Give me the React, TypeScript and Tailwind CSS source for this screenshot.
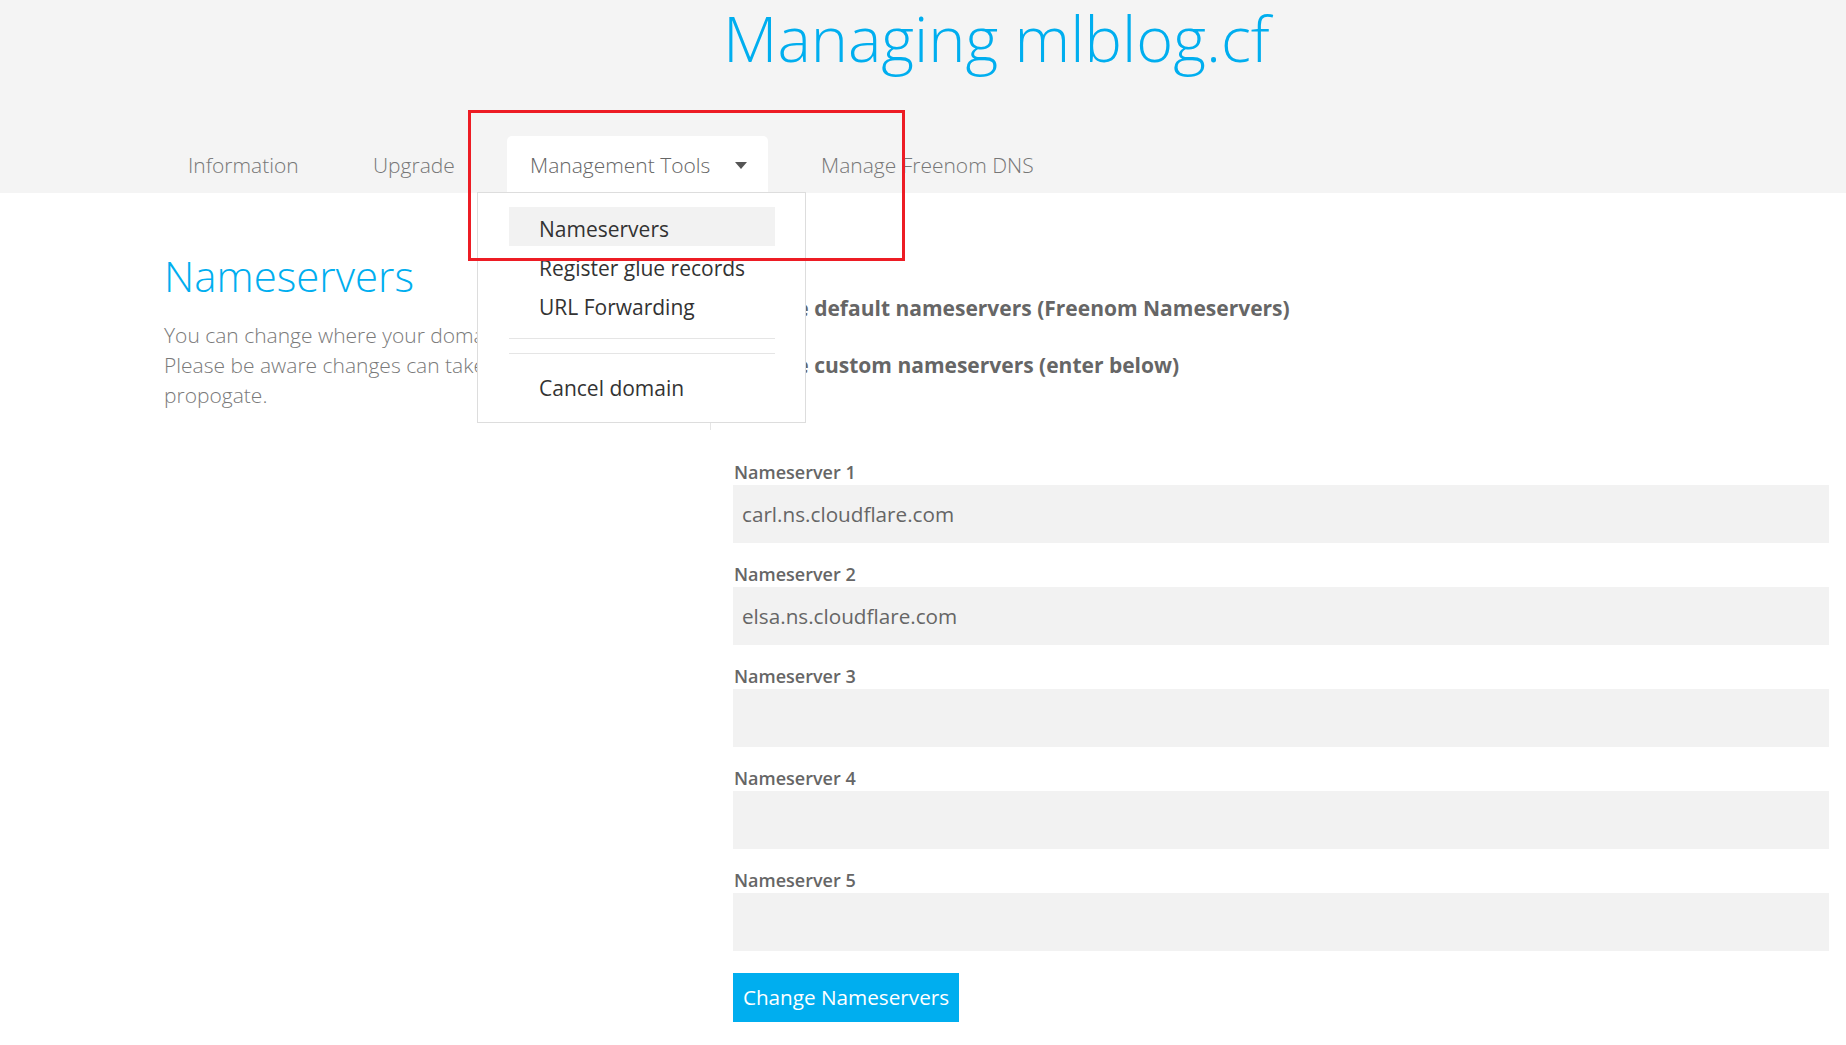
import React from "react";

const tabs = [
  { name: "Information", w: "w-[155px]" },
  { name: "Upgrade", w: "w-[127px]" },
  { name: "Management Tools", w: "w-[261px]" },
  { name: "Manage Freenom DNS", w: "w-[260px]" },
];

const fields = [
  { label: "Nameserver 1", value: "carl.ns.cloudflare.com" },
  { label: "Nameserver 2", value: "elsa.ns.cloudflare.com" },
  { label: "Nameserver 3", value: "" },
  { label: "Nameserver 4", value: "" },
  { label: "Nameserver 5", value: "" },
];

const Caret = () => (
  <svg width="12" height="7" viewBox="0 0 12 7" className="ml-[25px]">
    <path d="M0 0h12L6 7z" fill="#555" />
  </svg>
);

const App = () => {
  return (
    <div className="relative w-full min-h-screen bg-white font-['Open_Sans',sans-serif]">
      {/* header */}
      <header className="bg-[#f4f4f4] h-[193px] pt-[6px]">
        <h1 className="pl-[723px] text-[63px] leading-none font-light text-[#00aeef]">
          Managing mlblog.cf
        </h1>
        <nav className="mt-[67px] flex h-[57px] pl-[165px] gap-[30px]">
          {tabs.map((t) => {
            const active = t.name === "Management Tools";
            return (
              <div
                key={t.name}
                className={
                  active
                    ? "flex items-center pt-[2px] pl-[23px] bg-white rounded-t-[5px] text-[21px] font-light text-[#666] " + t.w
                    : "flex items-center pt-[2px] pl-[23px] text-[21px] font-light text-[#777] " + t.w
                }
              >
                <span>{t.name}</span>
                {active && <Caret />}
              </div>
            );
          })}
        </nav>
      </header>

      <main className="flex">
        {/* left column */}
        <section className="w-[711px] h-[237px] shrink-0 border-r border-[#e5e5e5] pl-[164px] pt-[60px]">
          <h2 className="text-[42px] leading-[1.1] font-light text-[#00aeef]">Nameservers</h2>
          <p className="mt-[21px] text-[21px] leading-[30px] font-light text-[#7a7a7a]">
            You can change where your domain points to here.
            <br />
            Please be aware changes can take up to 24 hours to
            <br />
            propogate.
          </p>
        </section>

        {/* form column */}
        <section className="flex-1 pl-[22px] pr-[17px] pt-[100px]">
          <div className="flex flex-col gap-[27px]">
            <label className="flex items-center gap-[15px] h-[30px]">
              <span className="ml-[6px] w-4 h-4 rounded-full border border-[#999] bg-white" />
              <span className="text-[21px] leading-[30px] font-bold text-[#666]">
                Use default nameservers (Freenom Nameservers)
              </span>
            </label>
            <label className="flex items-center gap-[15px] h-[30px]">
              <span className="ml-[6px] w-4 h-4 rounded-full border-[5px] border-[#00aeef] bg-white" />
              <span className="text-[21px] leading-[30px] font-bold text-[#666]">
                Use custom nameservers (enter below)
              </span>
            </label>
          </div>

          <div className="mt-[81px] flex flex-col gap-[20px]">
            {fields.map((f) => (
              <div key={f.label}>
                <div className="h-[24px] leading-[22px] pl-px text-[18px] font-semibold text-[#666]">
                  {f.label}
                </div>
                <input
                  readOnly
                  value={f.value}
                  className="block w-full h-[58px] px-[9px] bg-[#f2f2f2] text-[20.7px] text-[#666] outline-none"
                />
              </div>
            ))}
          </div>

          <button className="mt-[22px] h-[49px] w-[226px] bg-[#00aeef] text-white text-[20.7px] text-center">
            Change Nameservers
          </button>
        </section>
      </main>

      {/* dropdown menu */}
      <div className="absolute left-[477px] top-[192px] w-[329px] h-[231px] bg-white border border-[#dddddd] pl-[31px] pr-[30px] pt-[14px]">
        <div className="h-[39px] pt-[5px] leading-[34px] pl-[30px] bg-[#f2f2f2] text-[21px] text-[#333]">Nameservers</div>
        <div className="h-[39px] pt-[5px] leading-[34px] pl-[30px] text-[21px] text-[#333]">Register glue records</div>
        <div className="h-[39px] pt-[5px] leading-[34px] pl-[30px] text-[21px] text-[#333]">URL Forwarding</div>
        <div className="mt-[14px] h-px bg-[#e5e5e5]" />
        <div className="mt-[14px] h-px bg-[#e5e5e5]" />
        <div className="mt-[12px] h-[39px] pt-[5px] leading-[34px] pl-[30px] text-[21px] text-[#333]">Cancel domain</div>
      </div>

      {/* annotation box */}
      <div className="absolute left-[468px] top-[110px] w-[437px] h-[151px] border-[3px] border-[#ed1c24] pointer-events-none" />
    </div>
  );
};

export default App;
